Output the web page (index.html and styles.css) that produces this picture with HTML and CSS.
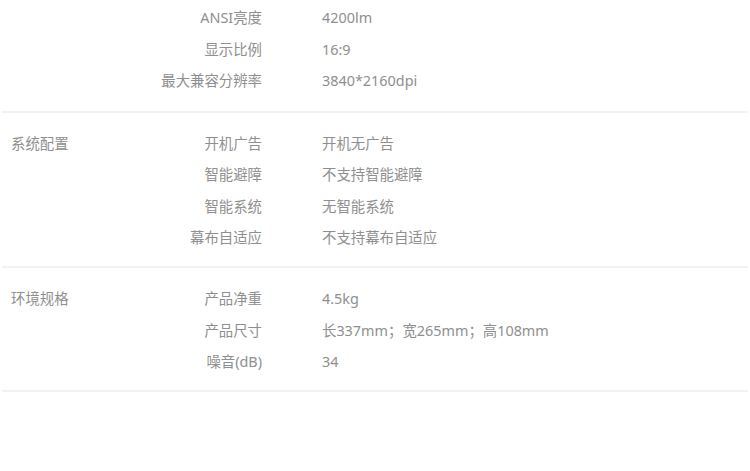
FILE: index.html
```html
<!DOCTYPE html>
<html lang="zh-CN">
<head>
    <meta charset="UTF-8">
    <title>规格参数</title>
    <link rel="stylesheet" href="styles.css">
</head>
<body>
    <div class="specs">
        <div class="group group-first">
            <div class="group-name"></div>
            <div class="rows">
                <div class="row"><span class="key">ANSI亮度</span><span class="val">4200lm</span></div>
                <div class="row"><span class="key">显示比例</span><span class="val">16:9</span></div>
                <div class="row"><span class="key">最大兼容分辨率</span><span class="val">3840*2160dpi</span></div>
            </div>
        </div>
        <div class="group">
            <div class="group-name">系统配置</div>
            <div class="rows">
                <div class="row"><span class="key">开机广告</span><span class="val">开机无广告</span></div>
                <div class="row"><span class="key">智能避障</span><span class="val">不支持智能避障</span></div>
                <div class="row"><span class="key">智能系统</span><span class="val">无智能系统</span></div>
                <div class="row"><span class="key">幕布自适应</span><span class="val">不支持幕布自适应</span></div>
            </div>
        </div>
        <div class="group">
            <div class="group-name">环境规格</div>
            <div class="rows">
                <div class="row"><span class="key">产品净重</span><span class="val">4.5kg</span></div>
                <div class="row"><span class="key">产品尺寸</span><span class="val">长337mm；宽265mm；高108mm</span></div>
                <div class="row"><span class="key">噪音(dB)</span><span class="val">34</span></div>
            </div>
        </div>
    </div>
</body>
</html>
```

FILE: styles.css
```css
body {
    margin: 0;
    background: #fff;
    font-family: "Noto Sans", "Noto Sans CJK SC", sans-serif;
    font-size: 14.4px;
    color: #8f8f8f;
}

.specs {
    margin: 0 2px;
}

.group {
    display: flex;
    padding: 15px 0 12.5px;
    border-bottom: 2px solid #f2f2f2;
}

.group-first {
    padding: 2px 0 14px;
}

.group-name {
    width: 150px;
    padding-left: 9px;
    line-height: 31.5px;
}

.rows {
    flex: 1;
}

.row {
    display: flex;
    line-height: 31.5px;
}

.key {
    width: 101px;
    text-align: right;
    white-space: nowrap;
}

.val {
    margin-left: 60px;
    white-space: nowrap;
}
```
